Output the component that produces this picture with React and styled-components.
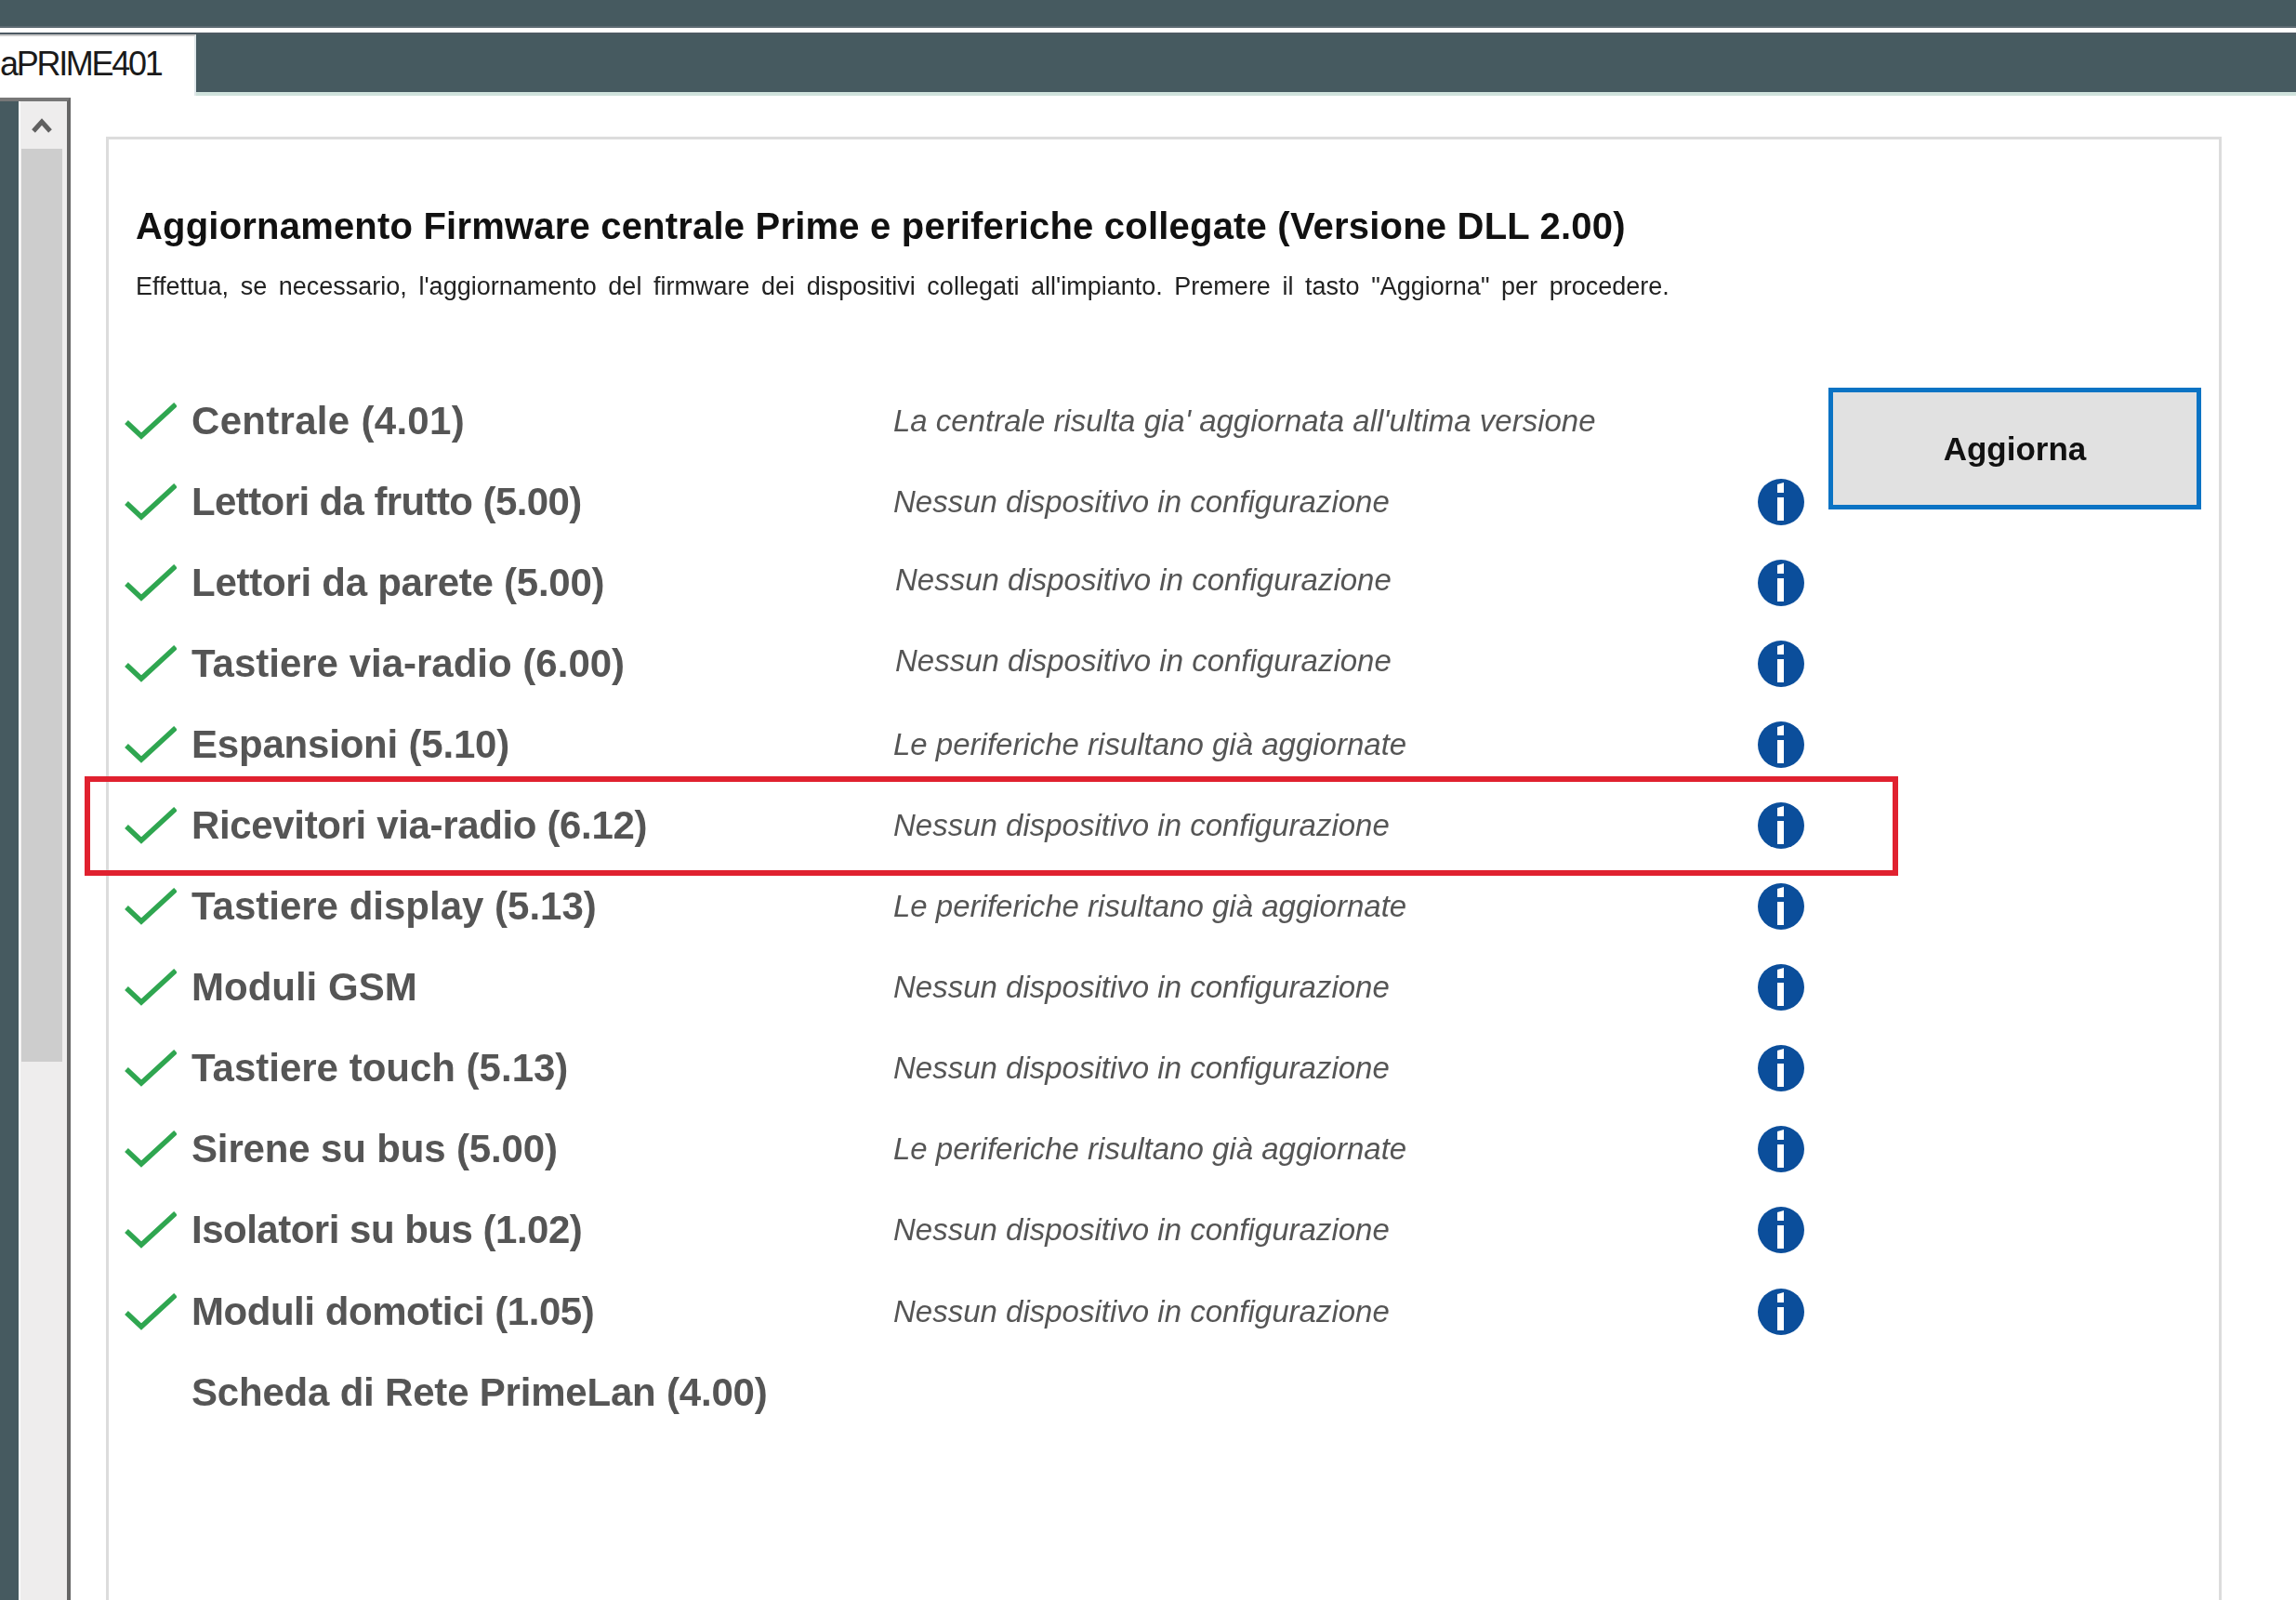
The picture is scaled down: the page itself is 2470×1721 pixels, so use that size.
import React from 'react';
import styled, { createGlobalStyle } from 'styled-components';

const GlobalStyle = createGlobalStyle`
  html, body {
    margin: 0;
    padding: 0;
    background: #fff;
    overflow: hidden;
  }
  body {
    font-family: "Liberation Sans", Arial, sans-serif;
  }
`

const Page = styled.div`
  width: 2470px;
  height: 1721px;
  display: flex;
  flex-direction: column;
  overflow: hidden;
  filter: blur(0.6px);
`

const TopBar = styled.div`
  height: 28px;
  flex: none;
  background: #465a60;
  border-bottom: 2px solid #5d6b73;
`

const TabBar = styled.div`
  height: 62px;
  flex: none;
  margin-top: 5px;
  display: flex;
  background: #465a60;
  border-top: 2px solid #4d5a63;
  border-bottom: 4px solid #cfe2dc;
`

const Tab = styled.div`
  width: 211px;
  margin-bottom: -4px;
  background: #fff;
  border-top: 2px solid #ccc;
  border-right: 2px solid #dfe7ea;
  box-sizing: border-box;
  padding: 9px 0 0 0;
  font-size: 36px;
  letter-spacing: -2.3px;
  color: #1a1a1a;
  white-space: nowrap;
  overflow: hidden;
`

const Body = styled.div`
  flex: 1;
  display: flex;
  min-height: 0;
`

const LeftRail = styled.div`
  width: 76px;
  flex: none;
  display: flex;
  box-sizing: border-box;
  border-top: 4px solid #777;
  border-right: 4px solid #666;
  margin-top: 2px;
`

const DarkStrip = styled.div`
  width: 20px;
  background: #465a60;
`

const ScrollTrack = styled.div`
  flex: 1;
  display: flex;
  flex-direction: column;
  background: #eeeded;
  border-left: 2px solid #fff;
  padding-right: 5px;
`

const ScrollArrow = styled.div`
  height: 51px;
  display: flex;
  align-items: center;
  justify-content: center;
`

const ScrollThumb = styled.div`
  height: 982px;
  margin-left: 1px;
  background: #cdcdcd;
`

const Panel = styled.div`
  flex: none;
  width: 2276px;
  height: 1700px;
  box-sizing: border-box;
  margin: 44px 0 0 38px;
  border: 3px solid #dcdcdc;
  border-bottom: none;
`

const Title = styled.h1`
  margin: 70px 0 0 29px;
  font-size: 40px;
  line-height: 46px;
  letter-spacing: 0.2px;
  font-weight: bold;
  color: #111;
  white-space: nowrap;
`

const Subtitle = styled.p`
  margin: 26px 0 0 29px;
  font-size: 27px;
  line-height: 32px;
  word-spacing: 5.1px;
  color: #222;
  white-space: nowrap;
`

const Columns = styled.div`
  display: flex;
  align-items: flex-start;
  margin-top: 85px;
`

const List = styled.div`
  width: 1850px;
  flex: none;
`

const Row = styled.div`
  position: relative;
  height: 87.1px;
  display: grid;
  grid-template-columns: 56px 755px 946px 50px;
  align-items: center;
  padding-left: 17px;

  ${props => props.$highlight && `
    &::after {
      content: "";
      position: absolute;
      left: -26px;
      top: -9px;
      width: 1951px;
      height: 107px;
      box-sizing: border-box;
      border: 6px solid #e0212f;
    }
  `}
`

const CheckSlot = styled.div`
  width: 56px;
  height: 40px;
`

const Name = styled.div`
  margin-left: 16px;
  font-size: 42px;
  font-weight: bold;
  color: #555;
  white-space: nowrap;
  letter-spacing: ${props => props.$track || 0}px;
`

const Status = styled.div`
  font-size: 33px;
  font-style: italic;
  color: #555;
  white-space: nowrap;
  margin-left: ${props => (props.$nudge ? 18 : 16)}px;
  margin-top: ${props => (props.$nudge ? -6 : 0)}px;
`

const InfoSlot = styled.div`
  display: flex;
  height: 50px;
`

const ActionColumn = styled.div`
  flex: 1;
  padding-top: 8px;
`

const UpdateButton = styled.button`
  display: block;
  width: 401px;
  height: 131px;
  box-sizing: border-box;
  background: #e1e1e1;
  border: 5px solid #0a73c4;
  font-family: inherit;
  font-size: 35px;
  font-weight: bold;
  color: #111;
`

const Check = () => (
  <svg width="56" height="40" viewBox="0 0 56 40">
    <path d="M2 21 L18 36 L55 2" fill="none" stroke="#2fa650" strokeWidth="5.5" />
  </svg>
)

const Info = () => (
  <svg width="50" height="50" viewBox="0 0 50 50">
    <circle cx="25" cy="25" r="25" fill="#0b4e9b" />
    <rect x="21" y="20" width="7" height="25" fill="#fff" />
    <path d="M21 6 L28 4 L28 15 L21 15 Z" fill="#fff" />
  </svg>
)

const NONE = 'Nessun dispositivo in configurazione'
const DONE = 'Le periferiche risultano già aggiornate'

const devices = [
  { name: 'Centrale (4.01)', track: 0.3, status: "La centrale risulta gia' aggiornata all'ultima versione", check: true },
  { name: 'Lettori da frutto (5.00)', track: -0.6, status: NONE, check: true, info: true },
  { name: 'Lettori da parete (5.00)', track: -0.26, status: NONE, check: true, info: true, nudge: true },
  { name: 'Tastiere via-radio (6.00)', status: NONE, check: true, info: true, nudge: true },
  { name: 'Espansioni (5.10)', track: -0.2, status: DONE, check: true, info: true },
  { name: 'Ricevitori via-radio (6.12)', track: -0.35, status: NONE, check: true, info: true, highlight: true },
  { name: 'Tastiere display (5.13)', status: DONE, check: true, info: true },
  { name: 'Moduli GSM', status: NONE, check: true, info: true },
  { name: 'Tastiere touch (5.13)', status: NONE, check: true, info: true },
  { name: 'Sirene su bus (5.00)', track: -0.15, status: DONE, check: true, info: true },
  { name: 'Isolatori su bus (1.02)', track: -0.5, status: NONE, check: true, info: true },
  { name: 'Moduli domotici (1.05)', track: -0.46, status: NONE, check: true, info: true },
  { name: 'Scheda di Rete PrimeLan (4.00)', track: -0.2 },
]

export default function App() {
  return (
    <Page>
      <GlobalStyle />
      <TopBar />
      <TabBar>
        <Tab>aPRIME401</Tab>
      </TabBar>
      <Body>
        <LeftRail>
          <DarkStrip />
          <ScrollTrack>
            <ScrollArrow>
              <svg width="24" height="18" viewBox="0 0 24 18">
                <path d="M3 15 L12 5 L21 15" fill="none" stroke="#606060" strokeWidth="5" />
              </svg>
            </ScrollArrow>
            <ScrollThumb />
          </ScrollTrack>
        </LeftRail>
        <Panel>
          <Title>Aggiornamento Firmware centrale Prime e periferiche collegate (Versione DLL 2.00)</Title>
          <Subtitle>Effettua, se necessario, l'aggiornamento del firmware dei dispositivi collegati all'impianto. Premere il tasto "Aggiorna" per procedere.</Subtitle>
          <Columns>
            <List>
              {devices.map(d => (
                <Row key={d.name} $highlight={d.highlight}>
                  <CheckSlot>{d.check && <Check />}</CheckSlot>
                  <Name $track={d.track}>{d.name}</Name>
                  <Status $nudge={d.nudge}>{d.status}</Status>
                  <InfoSlot>{d.info && <Info />}</InfoSlot>
                </Row>
              ))}
            </List>
            <ActionColumn>
              <UpdateButton>Aggiorna</UpdateButton>
            </ActionColumn>
          </Columns>
        </Panel>
      </Body>
    </Page>
  );
}
